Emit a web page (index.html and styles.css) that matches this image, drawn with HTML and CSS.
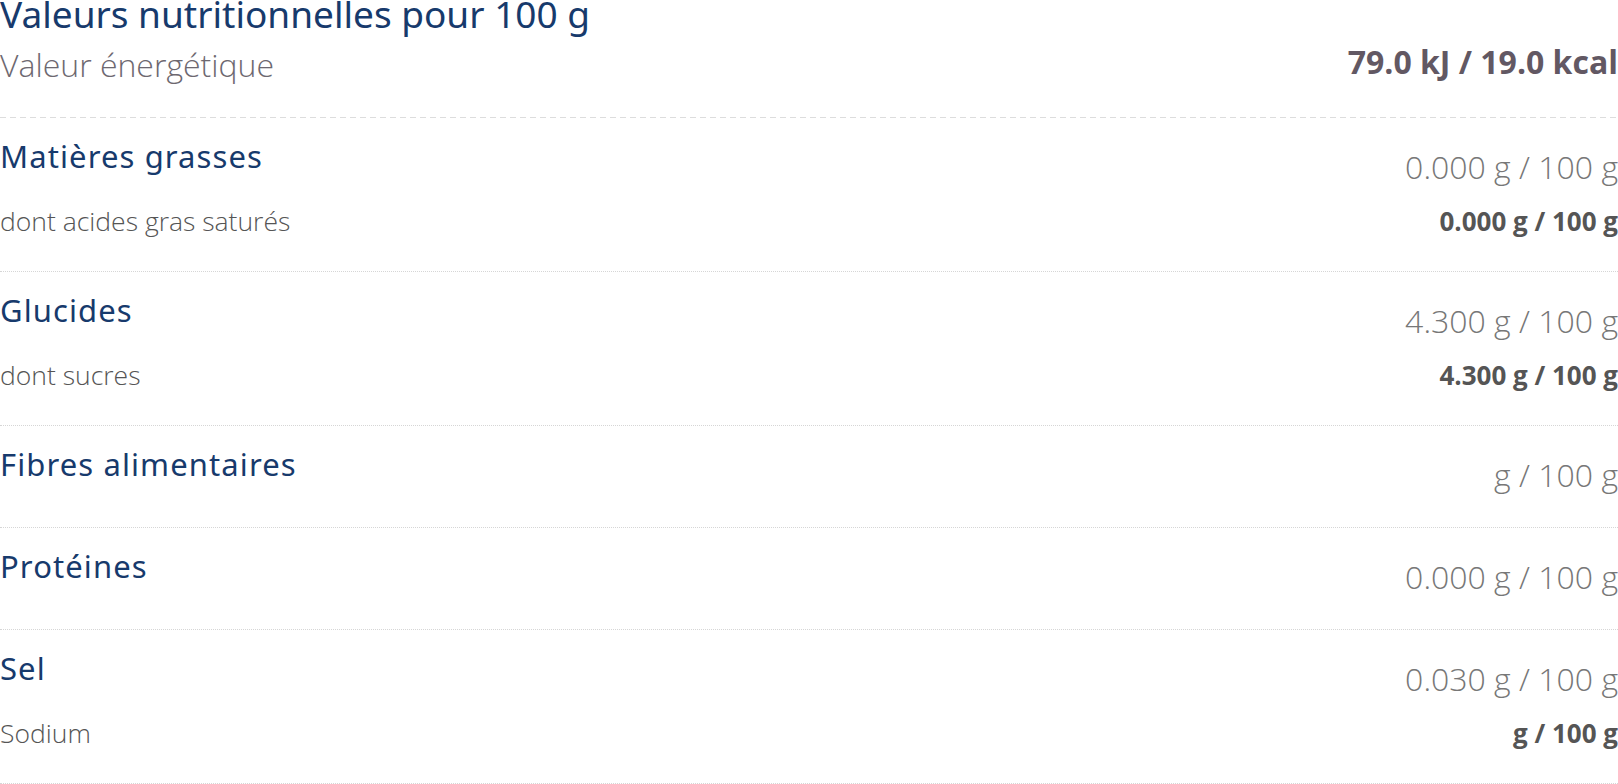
FILE: index.html
```html
<!DOCTYPE html>
<html lang="fr">
<head>
    <meta charset="UTF-8">
    <meta name="viewport" content="width=device-width, initial-scale=1.0">
    <title>Valeurs nutritionnelles</title>
    <link rel="stylesheet" href="styles.css">
</head>
<body>
    <div class="nutrition">
        <h2 class="title">Valeurs nutritionnelles pour 100 g</h2>
        <div class="energy">
            <span class="energy-label">Valeur énergétique</span>
            <span class="energy-value">79.0 kJ / 19.0 kcal</span>
        </div>

        <div class="nutrient">
            <div class="main">
                <span class="name">Matières grasses</span>
                <span class="value">0.000 g / 100 g</span>
            </div>
            <div class="sub">
                <span class="sub-name">dont acides gras saturés</span>
                <span class="sub-value">0.000 g / 100 g</span>
            </div>
        </div>

        <div class="nutrient">
            <div class="main">
                <span class="name">Glucides</span>
                <span class="value">4.300 g / 100 g</span>
            </div>
            <div class="sub">
                <span class="sub-name">dont sucres</span>
                <span class="sub-value">4.300 g / 100 g</span>
            </div>
        </div>

        <div class="nutrient">
            <div class="main">
                <span class="name">Fibres alimentaires</span>
                <span class="value">g / 100 g</span>
            </div>
        </div>

        <div class="nutrient">
            <div class="main">
                <span class="name">Protéines</span>
                <span class="value">0.000 g / 100 g</span>
            </div>
        </div>

        <div class="nutrient">
            <div class="main">
                <span class="name">Sel</span>
                <span class="value">0.030 g / 100 g</span>
            </div>
            <div class="sub">
                <span class="sub-name">Sodium</span>
                <span class="sub-value">g / 100 g</span>
            </div>
        </div>
    </div>
</body>
</html>
```

FILE: styles.css
```css
body {
    margin: 0;
    padding: 0;
    background: #fff;
    font-family: "Open Sans", "Liberation Sans", sans-serif;
}
.nutrition {
    width: 1618px;
}
.title {
    margin: 0;
    font-family: "Noto Sans", "Liberation Sans", sans-serif;
    font-weight: 400;
    font-size: 37px;
    line-height: 28px;
    color: #173a6c;
}
.energy {
    display: flex;
    justify-content: space-between;
    align-items: flex-start;
    padding: 10px 0 31px;
    background: repeating-linear-gradient(to right, #ddd 0 6px, transparent 6px 10px) bottom / 100% 1px no-repeat;
}
.energy-label {
    padding-top: 5px;
    font-weight: 300;
    font-size: 32px;
    line-height: 44px;
    color: #6d6870;
}
.energy-value {
    padding-top: 2px;
    font-weight: 700;
    font-size: 32px;
    line-height: 44px;
    color: #625863;
}
.nutrient {
    padding: 18px 0 32px;
    border-bottom: 1px dotted #d6d6d6;
}
.main, .sub {
    display: flex;
    justify-content: space-between;
    align-items: flex-start;
}
.name {
    font-family: "Noto Sans", "Liberation Sans", sans-serif;
    font-size: 31px;
    line-height: 40px;
    letter-spacing: 1.1px;
    color: #173a6c;
}
.value {
    padding-top: 11px;
    font-weight: 300;
    font-size: 32px;
    line-height: 40px;
    color: #777;
}
.sub {
    margin-top: 16px;
}
.sub-name {
    font-weight: 300;
    font-size: 26.5px;
    line-height: 36px;
    color: #555;
}
.sub-value {
    font-weight: 700;
    font-size: 26px;
    line-height: 36px;
    color: #555;
}
```
